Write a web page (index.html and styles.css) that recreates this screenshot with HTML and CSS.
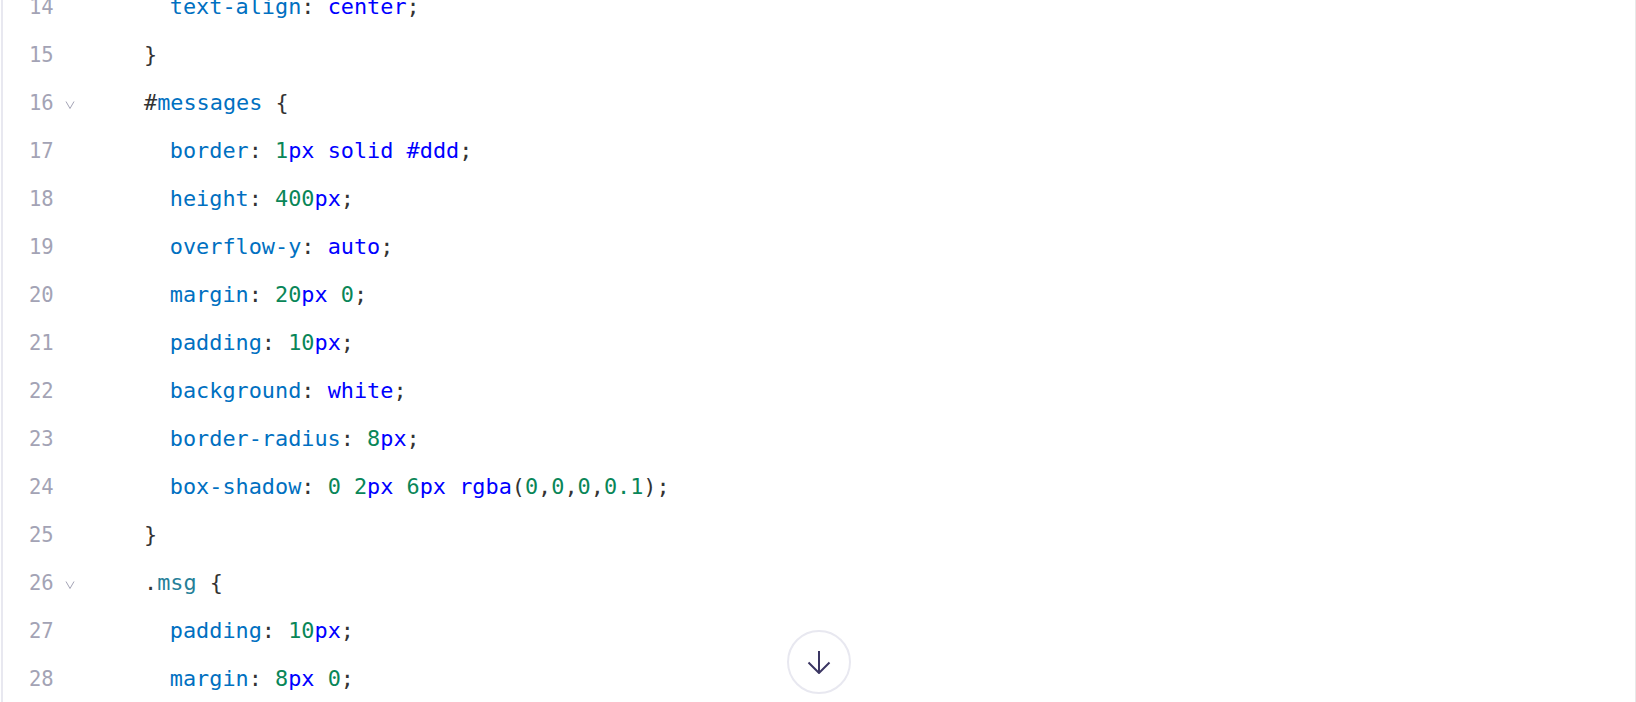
FILE: index.html
```html
<!DOCTYPE html>
<html lang="en">
<head>
<meta charset="utf-8">
<title>Code</title>
<link rel="stylesheet" href="styles.css">
</head>
<body>
<main class="viewer">
  <div class="code">
    <div class="line"><span class="num">14</span><span class="fold"></span><code class="src in"><i class="p">text-align</i>: <i class="v">center</i>;</code></div>
    <div class="line"><span class="num">15</span><span class="fold"></span><code class="src">}</code></div>
    <div class="line"><span class="num">16</span><span class="fold"><svg viewBox="0 0 10 8"><path d="M1 .5 5 7.500 9 .5"/></svg></span><code class="src">#<i class="p">messages</i> {</code></div>
    <div class="line"><span class="num">17</span><span class="fold"></span><code class="src in"><i class="p">border</i>: <i class="n">1</i><i class="v">px</i> <i class="v">solid</i> <i class="v">#ddd</i>;</code></div>
    <div class="line"><span class="num">18</span><span class="fold"></span><code class="src in"><i class="p">height</i>: <i class="n">400</i><i class="v">px</i>;</code></div>
    <div class="line"><span class="num">19</span><span class="fold"></span><code class="src in"><i class="p">overflow-y</i>: <i class="v">auto</i>;</code></div>
    <div class="line"><span class="num">20</span><span class="fold"></span><code class="src in"><i class="p">margin</i>: <i class="n">20</i><i class="v">px</i> <i class="n">0</i>;</code></div>
    <div class="line"><span class="num">21</span><span class="fold"></span><code class="src in"><i class="p">padding</i>: <i class="n">10</i><i class="v">px</i>;</code></div>
    <div class="line"><span class="num">22</span><span class="fold"></span><code class="src in"><i class="p">background</i>: <i class="v">white</i>;</code></div>
    <div class="line"><span class="num">23</span><span class="fold"></span><code class="src in"><i class="p">border-radius</i>: <i class="n">8</i><i class="v">px</i>;</code></div>
    <div class="line"><span class="num">24</span><span class="fold"></span><code class="src in"><i class="p">box-shadow</i>: <i class="n">0</i> <i class="n">2</i><i class="v">px</i> <i class="n">6</i><i class="v">px</i> <i class="v">rgba</i>(<i class="n">0</i>,<i class="n">0</i>,<i class="n">0</i>,<i class="n">0.1</i>);</code></div>
    <div class="line"><span class="num">25</span><span class="fold"></span><code class="src">}</code></div>
    <div class="line"><span class="num">26</span><span class="fold"><svg viewBox="0 0 10 8"><path d="M1 .5 5 7.500 9 .5"/></svg></span><code class="src">.<i class="c">msg</i> {</code></div>
    <div class="line"><span class="num">27</span><span class="fold"></span><code class="src in"><i class="p">padding</i>: <i class="n">10</i><i class="v">px</i>;</code></div>
    <div class="line"><span class="num">28</span><span class="fold"></span><code class="src in"><i class="p">margin</i>: <i class="n">8</i><i class="v">px</i> <i class="n">0</i>;</code></div>
  </div>
  <button class="down" type="button" aria-label="Scroll to bottom">
    <svg viewBox="0 0 24 24" width="24" height="24"><path d="M12 1v22M1.500 12.500 12 23l10.500-10.500"/></svg>
  </button>
</main>
</body>
</html>
```
FILE: styles.css
```css
html, body {
  margin: 0;
  height: 100%;
  background: #fff;
  overflow: hidden;
}

.viewer {
  position: relative;
  height: 702px;
  margin-left: 1px;
  box-sizing: border-box;
  border-left: 2px solid #e8e8f0;
  border-right: 1px solid #e8e8e8;
  overflow: hidden;
}

.code {
  margin-top: -18px;
}

.line {
  display: flex;
  align-items: center;
  height: 48px;
  font-family: "DejaVu Sans Mono", "Liberation Mono", monospace;
  font-size: 21.85px;
}

.num {
  width: 25px;
  margin-top: 2px;
  margin-left: 26px;
  color: #a3a3b5;
  font-size: 20.5px;
  white-space: nowrap;
}

.fold {
  display: flex;
  align-items: center;
  width: 10px;
  height: 8px;
  margin-top: 6px;
  margin-left: 11px;
}

.fold svg {
  width: 10px;
  height: 8px;
  fill: none;
  stroke: #a3a3b5;
  stroke-width: 1;
}

.src {
  margin-left: 69px;
  font: inherit;
  color: #333;
  white-space: pre;
}

.src.in {
  padding-left: 25.800px;
}

.src i {
  font-style: normal;
}

.p { color: #0070c1; }
.v { color: #0000ff; }
.n { color: #098658; }
.c { color: #267f99; }

.down {
  position: absolute;
  left: 784px;
  top: 630px;
  display: flex;
  align-items: center;
  justify-content: center;
  width: 64px;
  height: 64px;
  padding: 0;
  border: 2px solid #e8e8f0;
  border-radius: 50%;
  background: #fff;
}

.down svg {
  fill: none;
  stroke: #3b3663;
  stroke-width: 2;
}
```
